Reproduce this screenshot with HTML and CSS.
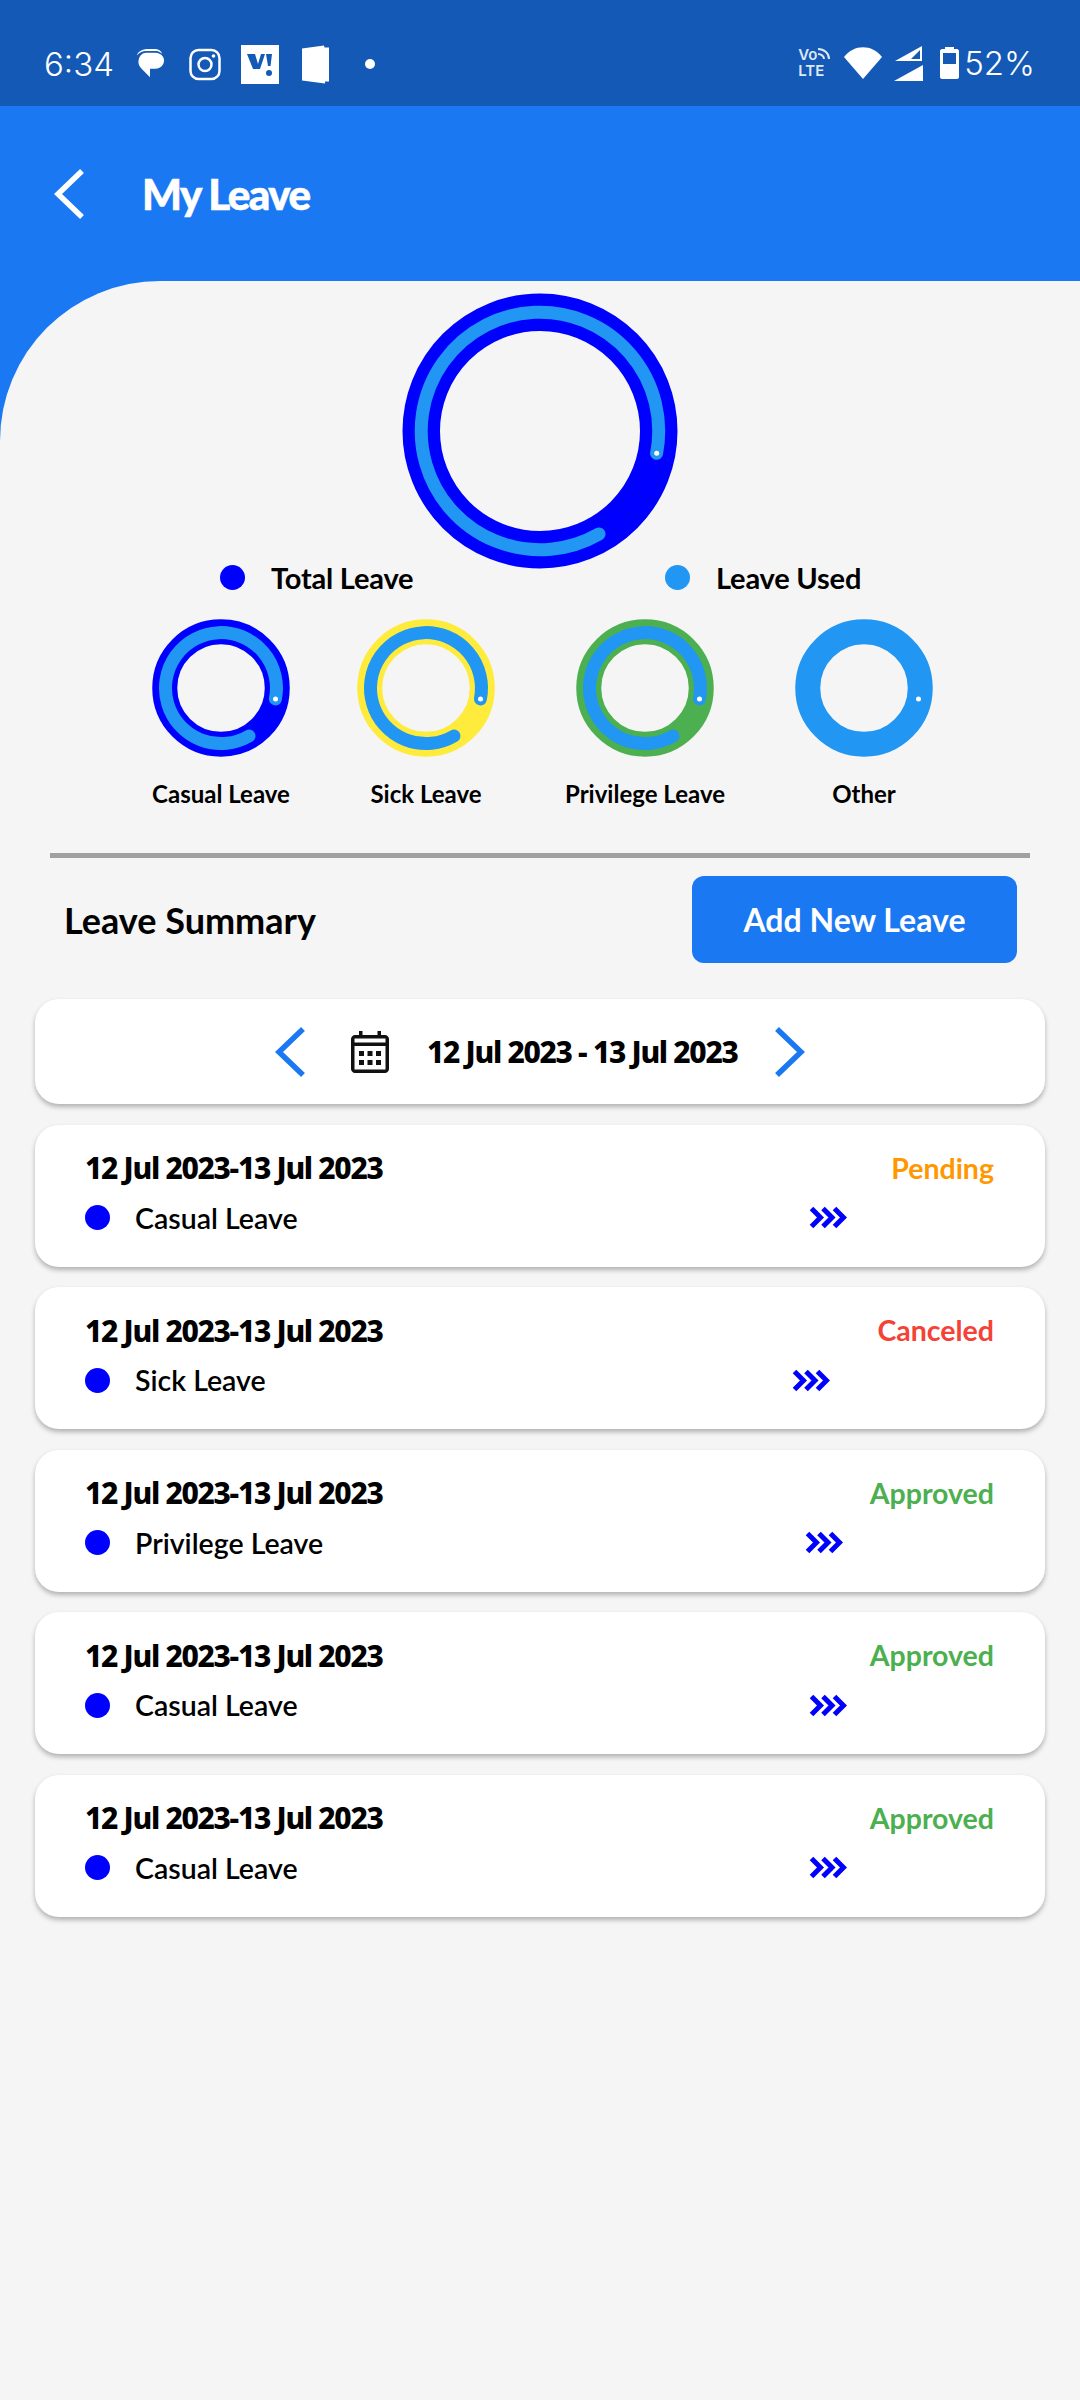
FILE: index.html
```html
<!DOCTYPE html>
<html lang="en">
<head>
    <meta charset="UTF-8">
    <title>My Leave</title>
    <link rel="stylesheet" href="styles.css">
</head>
<body>
    <svg width="0" height="0" class="defs">
        <defs>
            <g id="ring-big">
                <circle cx="138" cy="138" r="118.750" fill="none" stroke="currentColor" stroke-width="37.500"/>
                <path d="M254.600 160.300 A118.750 118.750 0 1 0 197 241" fill="none" stroke="#2196f3" stroke-width="13" stroke-linecap="round"/>
                <circle cx="254.700" cy="160.300" r="2.500" fill="#fff"/>
            </g>
            <g id="ring">
                <circle cx="69" cy="69" r="56.250" fill="none" stroke="currentColor" stroke-width="25"/>
                <path d="M123.400 80 A55.500 55.500 0 1 0 97 117" fill="none" stroke="#2196f3" stroke-width="13" stroke-linecap="round"/>
                <circle cx="123.500" cy="80" r="2.500" fill="#fff"/>
            </g>
            <g id="chevrons" fill="none" stroke="#0000ff" stroke-width="5">
                <path d="M2.500 2.500 L11.500 11.500 L2.500 20.500"/>
                <path d="M14 2.500 L23 11.500 L14 20.500"/>
                <path d="M25.500 2.500 L34.500 11.500 L25.500 20.500"/>
            </g>
        </defs>
    </svg>

    <div class="status-bar">
        <div class="status-left">
            <span class="status-text">6:34</span>
            <svg class="ic-msg" width="30" height="30" viewBox="0 0 30 32">
                <path d="M1 7 C2 2 8 0 14 0 H20 C24 0 27 2 28 5 C25 2 22 2 18 2 H11 C7 2 3 4 1 7Z" fill="#fff"/>
                <path d="M11 4 H21 C26 4 30 8 30 12 C30 17 26 21 21 21 H15 V30 L6 21 C3 18 2 15 3 11 C4 7 7 4 11 4Z" fill="#fff"/>
            </svg>
            <svg class="ic-insta" width="32" height="33" viewBox="0 0 32 32" fill="none" stroke="#fff" stroke-width="2.500">
                <rect x="1.500" y="1.500" width="29" height="29" rx="8"/>
                <circle cx="16" cy="16" r="6.500"/>
                <circle cx="24.500" cy="7.500" r="1.800" fill="#fff" stroke="none"/>
            </svg>
            <svg class="ic-vi" width="38" height="39" viewBox="0 0 38 39">
                <rect width="38" height="39" fill="#fff"/>
                <path d="M6 9 H14 L17 19 L20 9 H24 L19 24 H12Z" fill="#1359b5"/>
                <path d="M25 9 H31 L29.500 21 H27Z" fill="#1359b5"/>
                <circle cx="28" cy="28" r="3" fill="#1359b5"/>
            </svg>
            <svg class="ic-book" width="27" height="39" viewBox="0 0 27 38">
                <path d="M0 3 L22 0 L22.500 2 H27 V36 H23 V38 L0 35Z" fill="#fff"/>
            </svg>
            <span class="status-dot"></span>
        </div>
        <div class="status-right">
            <span class="volte"><span>Vo<svg width="13" height="13" viewBox="0 0 13 13" fill="none" stroke="#dfe8f5" stroke-width="2"><path d="M1 2 C7 2 12 6 12 12"/><path d="M1 7 C4 7 7 9 7 12"/></svg></span><span>LTE</span></span>
            <svg class="ic-wifi" width="38" height="32" viewBox="0 0 38 32"><path d="M0 10 C10 -3 28 -3 38 10 L19 32Z" fill="#fff"/></svg>
            <svg class="ic-signal" width="29" height="37" viewBox="0 0 29 37">
                <path d="M1 16 L28 1 V16Z M17 14 H26 V5Z" fill="#fff" fill-rule="evenodd"/>
                <path d="M0 36 L29 20 V36Z" fill="#fff"/>
            </svg>
            <svg class="ic-batt" width="19" height="32" viewBox="0 0 19 32">
                <path d="M5 2 V0 H14 V2 H17 C18 2 19 3 19 4 V30 C19 31 18 32 17 32 H2 C1 32 0 31 0 30 V4 C0 3 1 2 2 2Z M3 6 V17 H16 V6Z" fill="#fff" fill-rule="evenodd"/>
            </svg>
            <span class="status-text">52%</span>
        </div>
    </div>

    <header class="app-bar">
        <svg class="back" width="30" height="50" viewBox="0 0 30 50" fill="none" stroke="#fff" stroke-width="5.500">
            <path d="M28 2 L4 25 L28 48"/>
        </svg>
        <h1>My Leave</h1>
    </header>

    <main class="content">
        <section class="overview">
            <svg class="ring-large" width="276" height="276" style="color:#0000ff">
                <use href="#ring-big"/>
            </svg>
            <div class="legend">
                <div class="legend-item"><span class="dot dot-total"></span>Total Leave</div>
                <div class="legend-item"><span class="dot dot-used"></span>Leave Used</div>
            </div>
            <div class="rings">
                <div class="ring-item">
                    <svg width="138" height="138" style="color:#0000ff"><use href="#ring"/></svg>
                    <span>Casual Leave</span>
                </div>
                <div class="ring-item ring-sick">
                    <svg width="138" height="138" style="color:#ffeb3b"><use href="#ring"/></svg>
                    <span>Sick Leave</span>
                </div>
                <div class="ring-item ring-privilege">
                    <svg width="138" height="138" style="color:#4caf50"><use href="#ring"/></svg>
                    <span>Privilege Leave</span>
                </div>
                <div class="ring-item ring-other">
                    <svg width="138" height="138" style="color:#2196f3"><use href="#ring"/></svg>
                    <span>Other</span>
                </div>
            </div>
        </section>

        <hr class="divider">

        <div class="summary-head">
            <h2>Leave Summary</h2>
            <button class="add-btn">Add New Leave</button>
        </div>

        <div class="card date-card">
            <svg class="arrow-left" width="30" height="50" viewBox="0 0 30 50" fill="none" stroke="#1a78f2" stroke-width="5.500">
                <path d="M28 2 L4 25 L28 48"/>
            </svg>
            <svg class="cal" width="38" height="42" viewBox="0 0 38 42">
                <path d="M8 0 H11.500 V4 H26.500 V0 H30 V4 H34 C36 4 38 6 38 8 V38 C38 40 36 42 34 42 H4 C2 42 0 40 0 38 V8 C0 6 2 4 4 4 H8Z M3.500 15 V38.500 H34.500 V15Z M3.500 11.500 H34.500 V7.500 H3.500Z" fill="#111" fill-rule="evenodd"/>
                <path d="M8 20 h5 v5 h-5z M16.500 20 h5 v5 h-5z M25 20 h5 v5 h-5z M8 29 h5 v5 h-5z M16.500 29 h5 v5 h-5z M25 29 h5 v5 h-5z" fill="#111"/>
            </svg>
            <span class="date-range">12 Jul 2023 - 13 Jul 2023</span>
            <svg class="arrow-right" width="30" height="50" viewBox="0 0 30 50" fill="none" stroke="#1a78f2" stroke-width="5.500">
                <path d="M2 2 L26 25 L2 48"/>
            </svg>
        </div>

        <div class="card leave-card">
            <div class="leave-top"><span class="leave-date">12 Jul 2023-13 Jul 2023</span><span class="st st-pending">Pending</span></div>
            <div class="leave-bottom"><span class="dot-sm"></span><span class="leave-name">Casual Leave</span><svg class="chev chev-casual" width="38" height="23"><use href="#chevrons"/></svg></div>
        </div>
        <div class="card leave-card">
            <div class="leave-top"><span class="leave-date">12 Jul 2023-13 Jul 2023</span><span class="st st-canceled">Canceled</span></div>
            <div class="leave-bottom"><span class="dot-sm"></span><span class="leave-name">Sick Leave</span><svg class="chev chev-sick" width="38" height="23"><use href="#chevrons"/></svg></div>
        </div>
        <div class="card leave-card">
            <div class="leave-top"><span class="leave-date">12 Jul 2023-13 Jul 2023</span><span class="st st-approved">Approved</span></div>
            <div class="leave-bottom"><span class="dot-sm"></span><span class="leave-name">Privilege Leave</span><svg class="chev chev-privilege" width="38" height="23"><use href="#chevrons"/></svg></div>
        </div>
        <div class="card leave-card">
            <div class="leave-top"><span class="leave-date">12 Jul 2023-13 Jul 2023</span><span class="st st-approved">Approved</span></div>
            <div class="leave-bottom"><span class="dot-sm"></span><span class="leave-name">Casual Leave</span><svg class="chev chev-casual" width="38" height="23"><use href="#chevrons"/></svg></div>
        </div>
        <div class="card leave-card">
            <div class="leave-top"><span class="leave-date">12 Jul 2023-13 Jul 2023</span><span class="st st-approved">Approved</span></div>
            <div class="leave-bottom"><span class="dot-sm"></span><span class="leave-name">Casual Leave</span><svg class="chev chev-casual" width="38" height="23"><use href="#chevrons"/></svg></div>
        </div>
    </main>
</body>
</html>
```

FILE: styles.css
```css
* {
    box-sizing: border-box;
}
html, body {
    margin: 0;
    padding: 0;
}
body {
    width: 1080px;
    height: 2400px;
    overflow: hidden;
    background-color: #1a78f2;
    font-family: Lato, "Noto Sans", sans-serif;
    color: #000;
}
.defs {
    display: block;
    height: 0;
}
.status-bar {
    height: 106px;
    background-color: #1359b5;
    display: flex;
    justify-content: space-between;
    align-items: center;
    padding: 22px 45px 0 44px;
    color: #fff;
}
.status-left, .status-right {
    display: flex;
    align-items: center;
}
.status-text {
    font-family: Inter, "Noto Sans", sans-serif;
    font-size: 33px;
    font-weight: 300;
}
.ic-msg {
    margin-left: 21px;
}
.ic-insta {
    margin-left: 24px;
}
.ic-vi {
    margin-left: 20px;
}
.ic-book {
    margin-left: 23px;
}
.status-dot {
    width: 10px;
    height: 10px;
    border-radius: 50%;
    background: #fff;
    margin-left: 36px;
}
.status-right {
    gap: 12px;
    margin-top: -2px;
}
.volte {
    width: 34px;
    display: flex;
    flex-direction: column;
    font-family: Inter, sans-serif;
    font-size: 15px;
    font-weight: 600;
    line-height: 16px;
    white-space: nowrap;
    color: #dfe8f5;
}
.ic-batt {
    margin-left: 5px;
    margin-right: -7px;
}
.app-bar {
    height: 175px;
    display: flex;
    align-items: center;
    padding-left: 54px;
    background-color: #1a78f2;
}
.back {
    margin-right: 58px;
}
.app-bar h1 {
    margin: 0;
    font-size: 42px;
    font-weight: 900;
    letter-spacing: -1.500px;
    -webkit-text-stroke: 0.600px #fff;
    color: #fff;
}
.content {
    height: 2119px;
    background-color: #f5f5f5;
    border-top-left-radius: 160px;
    padding: 12px 35px 0;
}
.overview {
    display: flex;
    flex-direction: column;
    align-items: center;
}
.ring-large {
    display: block;
}
.legend {
    display: flex;
    width: 100%;
    margin-top: -9px;
    padding-left: 185px;
    font-size: 29px;
    font-weight: 700;
    letter-spacing: -0.200px;
    height: 34px;
    align-items: center;
}
.legend-item {
    display: flex;
    align-items: center;
}
.legend-item:first-child {
    width: 445px;
}
.dot {
    width: 25px;
    height: 25px;
    border-radius: 50%;
    margin-right: 26px;
}
.dot-total {
    background: #0000ff;
}
.dot-used {
    background: #2196f3;
}
.rings {
    display: flex;
    align-self: flex-start;
    margin-top: 25px;
    margin-left: 117px;
}
.ring-item {
    width: 138px;
    display: flex;
    flex-direction: column;
    align-items: center;
}
.ring-item svg {
    display: block;
}
.ring-item span {
    margin-top: 21px;
    font-size: 24px;
    line-height: 31px;
    font-weight: 700;
    white-space: nowrap;
}
.ring-sick {
    margin-left: 67px;
}
.ring-privilege, .ring-other {
    margin-left: 81px;
}
.divider {
    border: 0;
    height: 5px;
    background: #a0a0a0;
    margin: 44px 15px 0;
}
.summary-head {
    display: flex;
    justify-content: space-between;
    align-items: center;
    margin-top: 18px;
    padding: 0 28px 0 29px;
}
.summary-head h2 {
    margin: 0;
    font-size: 36px;
    font-weight: 700;
}
.add-btn {
    width: 325px;
    height: 87px;
    border: 0;
    border-radius: 12px;
    background: #1a78f2;
    color: #fff;
    font-family: Lato, "Noto Sans", sans-serif;
    font-size: 32px;
    font-weight: 700;
}
.card {
    background: #fff;
    border-radius: 24px;
    box-shadow: 0 3px 5px rgba(0, 0, 0, 0.28);
}
.date-card {
    height: 105px;
    margin-top: 36px;
    display: flex;
    align-items: center;
    padding-left: 240px;
}
.cal {
    margin-left: 46px;
}
.date-range {
    margin-left: 38px;
    width: 306px;
    white-space: nowrap;
    font-family: "Noto Sans", sans-serif;
    font-size: 30px;
    font-weight: 800;
    letter-spacing: -1.300px;
}
.arrow-right {
    margin-left: 42px;
}
.leave-card {
    height: 142px;
    margin-top: 20.500px;
    padding: 25px 51px 0 50px;
}
.leave-top {
    display: flex;
    justify-content: space-between;
    align-items: center;
    height: 36px;
}
.leave-date {
    font-family: "Noto Sans", sans-serif;
    font-size: 30px;
    font-weight: 800;
    letter-spacing: -1.300px;
}
.st {
    font-size: 28.500px;
    font-weight: 700;
}
.st-pending {
    color: #ff9800;
}
.st-canceled {
    color: #f44336;
}
.st-approved {
    color: #4caf50;
}
.leave-bottom {
    display: flex;
    align-items: center;
    margin-top: 15px;
}
.dot-sm {
    width: 25px;
    height: 25px;
    border-radius: 50%;
    background: #0000ff;
    margin-right: 25px;
}
.leave-name {
    font-size: 28.500px;
    font-weight: 600;
}
.chev {
    margin-left: auto;
}
.chev-casual {
    margin-right: 147px;
}
.chev-sick {
    margin-right: 164px;
}
.chev-privilege {
    margin-right: 151px;
}
```
